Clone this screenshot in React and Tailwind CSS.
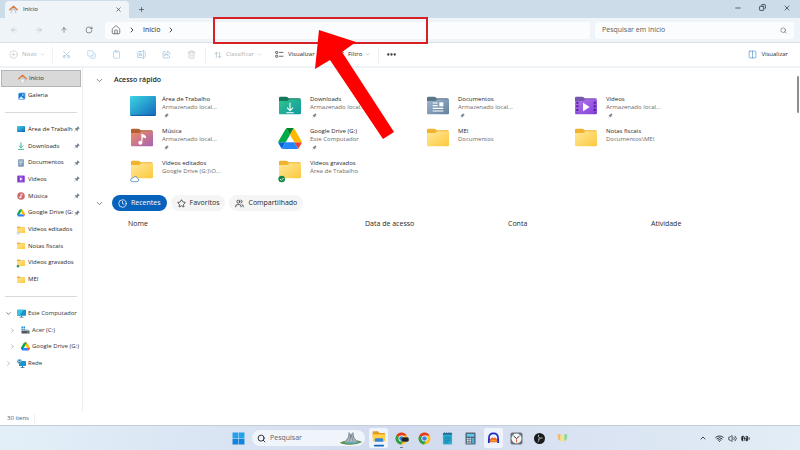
import {
  ArrowLeft, ArrowRight, ArrowUp, ArrowUpDown, BatteryCharging, ChevronDown, ChevronRight, ChevronUp,
  CirclePlus, Clipboard, Clock, Columns2, Copy, Copy as Restore, Ellipsis, Funnel, House,
  Minus, Plus, RotateCw, Scissors, Search, Star, Trash2, Users, Volume2, Wifi, X,
} from 'lucide-react';

function HomeIcon({ className }) {
  return (
    <svg viewBox="0 0 18 18" className={className}>
      <path d="M3.5 8v8.5H7V11h4v5.5h3.5V8L9 3z" fill="#c9ced3" />
      <path d="M7 11h4v5.5H7z" fill="#f7f9fb" />
      <path d="M1.3 9.6 9 2.4l7.7 7.2" fill="none" stroke="#dc7a3c" strokeWidth="2.5" strokeLinecap="round" strokeLinejoin="round" />
    </svg>
  );
}

function GalleryIcon({ className }) {
  return (
    <svg viewBox="0 0 18 18" className={className}>
      <rect x="3" y="1" width="14" height="14" rx="1.5" fill="#7cc5f5" />
      <rect x="1" y="3" width="14" height="14" rx="1.5" fill="#1377d4" />
      <circle cx="11" cy="7" r="1.7" fill="#fff" />
      <path d="m2 16 5-6.5 6.5 6.5z" fill="#d9f0ff" />
    </svg>
  );
}

function RenameIcon({ className }) {
  return (
    <svg viewBox="0 0 24 24" className={className} fill="none" stroke="currentColor" strokeWidth="1.8">
      <path d="M14 4H4a2 2 0 0 0-2 2v12q0 2 2 2h10M20 4.5q2 .5 2 2v11q0 1.5-2 2M17 1v22M14.5 1h5M14.5 23h5M5 16.5 9 7l4 9.5M6.5 13.5h5" />
    </svg>
  );
}

function ShareIcon({ className }) {
  return (
    <svg viewBox="0 0 24 24" className={className} fill="none" stroke="currentColor" strokeWidth="1.8" strokeLinejoin="round">
      <path d="M9 4H5a2 2 0 0 0-2 2v13q0 2 2 2h13q2 0 2-2v-3" />
      <path d="M15 2.5 22 9l-7 6.5v-4q-5 0-8 4 0-9 8-9z" />
    </svg>
  );
}

function ViewIcon({ className }) {
  return (
    <svg viewBox="0 0 24 20" className={className} fill="none" stroke="currentColor" strokeWidth="2">
      <rect x="1" y="1" width="6" height="6" rx="1.5" />
      <rect x="1" y="12" width="6" height="6" rx="1.5" />
      <path d="M11 4h12M11 15h12" />
    </svg>
  );
}

function DesktopIcon({ className }) {
  return (
    <svg viewBox="0 0 26 20" className={className} preserveAspectRatio="none">
      <defs>
        <linearGradient id="desk" x1="0" y1="0" x2="1" y2="1">
          <stop offset="0" stopColor="#3bd5e2" />
          <stop offset="1" stopColor="#1268bd" />
        </linearGradient>
      </defs>
      <rect width="26" height="20" rx="1.2" fill="url(#desk)" />
      <path d="M1 19.4h24" stroke="#0d4f96" strokeWidth="0.8" />
    </svg>
  );
}

function Folder({ id, tab, from, to, className, children }) {
  return (
    <svg viewBox="0 0 66 60" className={className}>
      <defs>
        <linearGradient id={id} x1="0" y1="0" x2="1" y2="1">
          <stop offset="0" stopColor={from} />
          <stop offset="1" stopColor={to} />
        </linearGradient>
      </defs>
      <path d="M0 6a4 4 0 0 1 4-4h17q3 0 5 2l3 3h32a4 4 0 0 1 4 4v10H0z" fill={tab} />
      <path d="M0 15h23q3 0 5-2l3-3h31a4 4 0 0 1 4 4v38a3 3 0 0 1-3 3H3a3 3 0 0 1-3-3z" fill={`url(#${id})`} />
      {children}
    </svg>
  );
}

function YellowFolder({ className, badge }) {
  return (
    <Folder id="yellow" tab="#f0b32f" from="#ffe79a" to="#fdc93c" className={`overflow-visible ${className}`}>
      {badge === 'cloud' && (
        <path d="M4 65q-6-1-5-6 1-5 6-4 3-7 10-5 4 2 4 5 5 1 4 6-1 4-5 4z" fill="#fff" stroke="#3a78c9" strokeWidth="2.2" />
      )}
      {badge === 'check' && (
        <g>
          <circle cx="8" cy="57" r="10" fill="#15884a" />
          <path d="m3 57 4 4 7-7" fill="none" stroke="#fff" strokeWidth="2.5" />
        </g>
      )}
    </Folder>
  );
}

function DownloadsFolder({ className }) {
  return (
    <Folder id="green" tab="#13795c" from="#2fc48d" to="#1397a0" className={className}>
      <path d="M33 20v23M24 35l9 9 9-9M22 50h22" fill="none" stroke="#fff" strokeWidth="3.2" />
    </Folder>
  );
}

function DocumentsFolder({ className }) {
  return (
    <Folder id="slate" tab="#5b7686" from="#9db6cd" to="#62809f" className={className}>
      <path d="M17 21h15M17 29h15M17 37h32M17 45h32" stroke="#fff" strokeWidth="3.4" />
      <rect x="37" y="19" width="12" height="12" fill="#fff" />
    </Folder>
  );
}

function VideosFolder({ className }) {
  return (
    <Folder id="violet" tab="#7756ae" from="#b276ee" to="#8440d8" className={className}>
      <path d="M24 20v26l20-13z" fill="#fff" />
      <path d="M7 17v35M59 17v35" stroke="#4b2291" strokeWidth="6" strokeDasharray="6 5" />
    </Folder>
  );
}

function MusicFolder({ className }) {
  return (
    <Folder id="music" tab="#b4602f" from="#ee8d62" to="#a561b4" className={className}>
      <circle cx="28" cy="44" r="6" fill="#fff" />
      <path d="M32.5 44V18l11 6v6l-8-4" fill="#fff" stroke="#fff" strokeWidth="2.5" />
    </Folder>
  );
}

function DriveIcon({ className }) {
  return (
    <svg viewBox="0 0 87 78" className={className}>
      <path d="M6.6 66.9l3.8 6.6c.8 1.4 1.900 2.500 3.300 3.300l13.700-23.800H0c0 1.500.4 3.100 1.200 4.500z" fill="#0066da" />
      <path d="M43.600 25 29.900 1.200c-1.300.8-2.500 1.900-3.300 3.300L1.200 48.500C.4 49.900 0 51.500 0 53h27.500z" fill="#00ac47" />
      <path d="M73.500 76.800c1.400-.8 2.500-1.900 3.300-3.300l9.200-16c.8-1.400 1.200-3 1.200-4.500H59.800l5.900 11.500z" fill="#ea4335" />
      <path d="M43.600 25 57.400 1.200C56 .4 54.500 0 52.900 0H34.400c-1.600 0-3.100.4-4.500 1.200z" fill="#00832d" />
      <path d="M59.800 53H27.500L13.700 76.800c1.400.8 2.900 1.200 4.500 1.200h50.900c1.600 0 3.100-.4 4.400-1.200z" fill="#2684fc" />
      <path d="M73.400 26.500 60.700 4.500c-.8-1.400-1.900-2.500-3.300-3.300L43.600 25l16.200 28h27.400c0-1.500-.4-3.100-1.200-4.500z" fill="#ffba00" />
    </svg>
  );
}

function DownloadIcon({ className }) {
  return (
    <svg viewBox="0 0 18 18" className={className} fill="none" stroke="#25ac86" strokeWidth="2">
      <path d="M9 1v11M4 8l5 5 5-5M2.5 16.5h13" />
    </svg>
  );
}

function DocumentIcon({ className }) {
  return (
    <svg viewBox="0 0 18 18" className={className}>
      <rect x="2.5" y="0.5" width="13" height="17" rx="1.5" fill="#7d99b6" />
      <path d="M5 4.5h8M5 8h8M5 11.5h5" stroke="#e9f1f9" strokeWidth="1.6" />
    </svg>
  );
}

function VideoIcon({ className }) {
  return (
    <svg viewBox="0 0 18 18" className={className}>
      <rect x="0.5" y="1" width="17" height="16" rx="1.5" fill="#9550e0" />
      <path d="M3 3v13M15 3v13" stroke="#5a279f" strokeWidth="2.2" strokeDasharray="2.4 2" />
      <path d="M7 5.5v7l5.5-3.5z" fill="#fff" />
    </svg>
  );
}

function MusicIcon({ className }) {
  return (
    <svg viewBox="0 0 18 18" className={className}>
      <circle cx="9" cy="9" r="8.5" fill="#d3696c" />
      <circle cx="7.5" cy="12" r="2.2" fill="#fff" />
      <path d="M9 12V4.5l4 2" fill="none" stroke="#fff" strokeWidth="1.6" />
    </svg>
  );
}

function MonitorIcon({ className }) {
  return (
    <svg viewBox="0 0 18 18" className={className}>
      <rect x="0" y="1.5" width="18" height="12" rx="1" fill="#1595cf" />
      <path d="M0 2.5a1 1 0 0 1 1-1h13L4 13.5H1a1 1 0 0 1-1-1z" fill="#3cc3e0" />
      <path d="M8 13.5h2v2.5H8zM5 15.5h8v1.5H5z" fill="#4d6a80" />
    </svg>
  );
}

function DiskIcon({ className }) {
  return (
    <svg viewBox="0 0 18 18" className={className}>
      <path d="M1 1h3v3H1zM5 1h3v3H5zM1 5h3v3H1zM5 5h3v3H5z" fill="#1b87d8" />
      <path d="M1 9h16v6H1z" fill="#4c545c" />
      <path d="M1 9h16l-2-2H3z" fill="#aab3bb" />
      <path d="M12 12h3" stroke="#7fe09b" strokeWidth="1.5" />
    </svg>
  );
}

function NetworkIcon({ className }) {
  return (
    <svg viewBox="0 0 18 18" className={className}>
      <rect x="4" y="4" width="14" height="10" rx="1" fill="#1b93cc" />
      <path d="M10 14h2v2.5h3V18H7v-1.5h3z" fill="#3f708f" />
      <circle cx="5" cy="5" r="4.5" fill="#2a7fb4" />
      <path d="M1 5h8M5 .8c-3 2-3 6 0 8.5 3-2.5 3-6.5 0-8.5" fill="none" stroke="#a8def5" />
    </svg>
  );
}

function PinIcon({ className }) {
  return (
    <svg viewBox="0 0 18 18" className={className}>
      <path d="m11 1 6 6-1.5 1.2-1-.2-3 3-.3 3.5L10 16l-3.800-3.800L1.500 17l-.7-.7 4.900-4.700L2 8l1.500-1.200 3.500-.3 3-3-.2-1z" fill="#76838f" />
    </svg>
  );
}

const pinned = [
  { label: 'Área de Trabalho', icon: DesktopIcon, pin: true },
  { label: 'Downloads', icon: DownloadIcon, pin: true },
  { label: 'Documentos', icon: DocumentIcon, pin: true },
  { label: 'Vídeos', icon: VideoIcon, pin: true },
  { label: 'Música', icon: MusicIcon, pin: true },
  { label: 'Google Drive (G:)', icon: DriveIcon, pin: true },
  { label: 'Vídeos editados', icon: YellowFolder, badge: 'cloud' },
  { label: 'Notas fiscais', icon: YellowFolder },
  { label: 'Vídeos gravados', icon: YellowFolder, badge: 'check' },
  { label: 'MEI', icon: YellowFolder },
];

const quickAccess = [
  { name: 'Área de Trabalho', place: 'Armazenado local...', icon: DesktopIcon, pin: true },
  { name: 'Downloads', place: 'Armazenado local...', icon: DownloadsFolder, pin: true },
  { name: 'Documentos', place: 'Armazenado local...', icon: DocumentsFolder, pin: true },
  { name: 'Vídeos', place: 'Armazenado local...', icon: VideosFolder, pin: true },
  { name: 'Música', place: 'Armazenado local...', icon: MusicFolder, pin: true },
  { name: 'Google Drive (G:)', place: 'Este Computador', icon: DriveIcon, pin: true },
  { name: 'MEI', place: 'Documentos', icon: YellowFolder },
  { name: 'Notas fiscais', place: 'Documentos\\MEI', icon: YellowFolder },
  { name: 'Vídeos editados', place: 'Google Drive (G:)\\O...', icon: YellowFolder, badge: 'cloud' },
  { name: 'Vídeos gravados', place: 'Área de Trabalho', icon: YellowFolder, badge: 'check' },
];

function TitleBar() {
  return (
    <header className="flex h-[18px] items-stretch bg-[#ccdce9] pl-[5px]">
      <div className="mt-px flex w-[124px] items-center rounded-t-[4px] bg-[#eff4f9] pr-[7px] pl-1">
        <HomeIcon className="size-[9px]" />
        <span className="ml-[5px] flex-1">Início</span>
        <button type="button" aria-label="Fechar guia"><X className="size-[7px]" /></button>
      </div>
      <button type="button" aria-label="Nova guia" className="ml-2 px-px"><Plus className="size-[7px]" /></button>
      <div className="ml-auto flex items-center gap-[17px] pr-[9px] pb-[3px]">
        <button type="button" aria-label="Minimizar"><Minus className="size-2" /></button>
        <button type="button" aria-label="Restaurar"><Restore className="size-[7px] -scale-x-100" strokeWidth={2.5} /></button>
        <button type="button" aria-label="Fechar"><X className="size-2" /></button>
      </div>
    </header>
  );
}

function NavigationBar() {
  return (
    <nav className="flex h-[25px] items-center border-b border-[#d5e0e9] bg-[#eff4f9] pr-[6px] pl-[10px]">
      <div className="flex w-[95px] gap-[17px] text-[#5c6064]">
        <button type="button" aria-label="Voltar" className="text-[#b9bec3]"><ArrowLeft className="size-2" /></button>
        <button type="button" aria-label="Avançar" className="text-[#b9bec3]"><ArrowRight className="size-2" /></button>
        <button type="button" aria-label="Acima"><ArrowUp className="size-2" /></button>
        <button type="button" aria-label="Atualizar"><RotateCw className="size-2" /></button>
      </div>
      <div className="flex h-[17px] flex-1 items-center rounded-[2px] bg-[#fafcfd] pl-[6px] text-[7px]">
        <button type="button" aria-label="Início"><House className="size-[10px] text-[#66696c]" /></button>
        <ChevronRight className="ml-[7px] size-2" strokeWidth={2.5} />
        <button type="button" className="ml-[7px]">Início</button>
        <ChevronRight className="ml-[7px] size-2" strokeWidth={2.5} />
      </div>
      <div className="ml-[5px] flex h-[17px] w-[199px] items-center rounded-[2px] bg-[#fafcfd] px-[7px] text-[7px]">
        <input type="search" aria-label="Pesquisar em Início" placeholder="Pesquisar em Início" className="min-w-0 flex-1 outline-none placeholder:text-[#5a5d60]" />
        <Search className="size-[7px] text-[#5f6366]" />
      </div>
    </nav>
  );
}

function Toolbar() {
  return (
    <div className="flex h-[25px] items-center border-b-2 border-[#eef3f8] bg-white pr-3 pl-[9px]">
      <button type="button" disabled className="flex w-[43px] items-center gap-1 text-[#adb1b5]">
        <CirclePlus className="size-[9px] text-[#b9c0c7]" strokeWidth={1.5} />Novo<ChevronDown className="-ml-px size-[5px]" />
      </button>
      <div className="flex h-4 w-[154px] items-center gap-4 border-x border-[#f0f0f0] pl-[9px] text-[#8fbce0]">
        <button type="button" disabled aria-label="Recortar"><Scissors className="size-[9px] -rotate-90" strokeWidth={1.5} /></button>
        <button type="button" disabled aria-label="Copiar"><Copy className="size-[9px] -scale-100" strokeWidth={1.5} /></button>
        <button type="button" disabled aria-label="Colar"><Clipboard className="size-[9px]" strokeWidth={1.5} /></button>
        <button type="button" disabled aria-label="Renomear"><RenameIcon className="size-[9px]" /></button>
        <button type="button" disabled aria-label="Compartilhar"><ShareIcon className="size-[9px]" /></button>
        <button type="button" disabled aria-label="Excluir" className="text-[#b3b7bb]"><Trash2 className="size-[9px]" strokeWidth={1.5} /></button>
      </div>
      <button type="button" disabled className="ml-[8px] flex w-[61px] items-center gap-1 text-[#adb1b5]">
        <ArrowUpDown className="size-2 text-[#9fb6c6]" />Classificar<ChevronDown className="-ml-px size-[5px]" />
      </button>
      <button type="button" className="flex w-[62px] items-center gap-1">
        <ViewIcon className="h-[7px] w-[9px]" />Visualizar<ChevronDown className="-ml-px size-[5px] text-[#85898d]" />
      </button>
      <button type="button" className="flex w-[41px] items-center gap-1">
        <Funnel className="size-[7px]" />Filtro<ChevronDown className="-ml-px size-[5px] text-[#85898d]" />
      </button>
      <button type="button" aria-label="Mais opções" className="flex h-4 items-center border-l border-[#f0f0f0] pl-[7px]">
        <Ellipsis className="size-[11px]" strokeWidth={3} />
      </button>
      <button type="button" className="ml-auto flex items-center gap-1">
        <Columns2 className="size-[9px] text-[#357fbb]" strokeWidth={1.5} />Visualizar
      </button>
    </div>
  );
}

function Sidebar() {
  return (
    <aside className="w-[83px] shrink-0 border-r border-[#f0f0f0] pt-[2px] pr-px pl-px">
      <a href="#inicio" className="flex h-[17px] items-center gap-[2px] border border-[#b5b5b5] bg-[#d9d9d9] pl-4">
        <HomeIcon className="size-[9px]" />Início
      </a>
      <a href="#galeria" className="flex h-[17px] items-center gap-[2px] pl-[17px]">
        <GalleryIcon className="size-2" />Galeria
      </a>
      <hr className="mx-1 my-2 border-[#dadada]" />
      <ul className="flex h-[167px] flex-col">
        {pinned.map(({ label, icon: Icon, pin, badge }) => (
          <li key={label} className="flex flex-1">
            <a href="#pasta" className="flex min-w-0 flex-1 items-center gap-[3px] pr-px pl-4">
              <Icon className={Icon === DesktopIcon ? 'h-[6px] w-2 shrink-0' : 'size-2 shrink-0'} badge={badge} />
              <span className="min-w-0 flex-1 overflow-hidden whitespace-nowrap">{label}</span>
              {pin && <PinIcon className="-ml-[2px] size-[6px] shrink-0" />}
            </a>
          </li>
        ))}
      </ul>
      <hr className="mx-1 my-2 border-[#dadada]" />
      <ul className="flex h-[67px] flex-col whitespace-nowrap text-[#303234]">
        <li className="flex flex-1 items-center pl-1">
          <ChevronDown className="mr-[5px] size-[7px] shrink-0" />
          <a href="#computador" className="flex items-center gap-[2px]"><MonitorIcon className="size-[9px]" />Este Computador</a>
        </li>
        <li className="flex flex-1 items-center pl-2">
          <ChevronRight className="mr-[5px] size-[7px] shrink-0 text-[#85898d]" />
          <a href="#acer" className="flex items-center gap-[2px]"><DiskIcon className="size-[9px]" />Acer (C:)</a>
        </li>
        <li className="flex flex-1 items-center pl-2">
          <ChevronRight className="mr-[5px] size-[7px] shrink-0 text-[#85898d]" />
          <a href="#drive" className="flex items-center gap-[2px]"><DriveIcon className="size-[9px]" />Google Drive (G:)</a>
        </li>
        <li className="flex flex-1 items-center pl-1">
          <ChevronRight className="mr-[5px] size-[7px] shrink-0 text-[#85898d]" />
          <a href="#rede" className="flex items-center gap-[2px]"><NetworkIcon className="size-[9px]" />Rede</a>
        </li>
      </ul>
    </aside>
  );
}

function Content() {
  return (
    <main className="min-w-0 flex-1 pt-[6px] pr-[3px] pl-3">
      <h2 className="flex h-[13px] items-center gap-[10px] text-[7px] font-semibold">
        <button type="button" aria-label="Recolher acesso rápido"><ChevronDown className="size-[9px]" strokeWidth={1.5} /></button>
        Acesso rápido
      </h2>
      <ul className="mt-2 grid grid-cols-[repeat(auto-fill,148px)] pl-[35px]">
        {quickAccess.map(({ name, place, icon: Icon, pin, badge }) => (
          <li key={name} className="h-8">
            <a href="#item" className="flex leading-2">
              <span className="flex h-6 w-[32px] pt-px">
                <Icon
                  className={Icon === DesktopIcon ? 'h-[20px] w-[26px]' : Icon === DriveIcon ? 'h-[21px] w-[24px]' : 'ml-px h-[20px] w-[22px]'}
                  badge={badge}
                />
              </span>
              <span>
                <span className="block">{name}</span>
                <span className="block text-[#6b6b6b]">{place}</span>
                {pin && <PinIcon className="mt-[2px] ml-[2px] size-[5px]" />}
              </span>
            </a>
          </li>
        ))}
      </ul>
      <div className="mt-1 flex h-4 items-center gap-1 text-[7px]">
        <button type="button" aria-label="Recolher recentes" className="mr-1"><ChevronDown className="size-[9px]" strokeWidth={1.5} /></button>
        <button type="button" className="flex h-4 items-center gap-1 rounded-full bg-[#0662bb] px-[6px] text-white">
          <Clock className="size-[9px]" />Recentes
        </button>
        <button type="button" className="flex h-4 items-center gap-1 rounded-full bg-[#f5f5f5] px-[6px]">
          <Star className="size-[9px]" />Favoritos
        </button>
        <button type="button" className="flex h-4 items-center gap-1 rounded-full bg-[#f5f5f5] px-[6px]">
          <Users className="size-[9px]" />Compartilhado
        </button>
      </div>
      <div className="pl-[33px]">
        <table className="mt-2 w-full table-fixed text-left text-[7px]">
          <thead>
            <tr>
              <th className="w-[237px] font-normal">Nome</th>
              <th className="font-normal">Data de acesso</th>
              <th className="font-normal">Conta</th>
              <th className="font-normal">Atividade</th>
            </tr>
          </thead>
        </table>
      </div>
    </main>
  );
}

function ChromeIcon({ className }) {
  return (
    <svg viewBox="0 0 24 24" className={className}>
      <circle cx="12" cy="12" r="11" fill="#fbc116" />
      <path d="M12 12 2.5 6.5A11 11 0 0 1 21.5 6.5H12z" fill="#e33b2e" />
      <path d="M2.5 6.5A11 11 0 0 0 11 23l5.5-8.5L12 12z" fill="#2c9f4b" />
      <circle cx="12" cy="12" r="5.5" fill="#fff" />
      <circle cx="12" cy="12" r="4.2" fill="#3b7de9" />
    </svg>
  );
}

function TaskButton({ label, active, running, children }) {
  return (
    <button
      type="button"
      aria-label={label}
      className={`relative flex h-5 w-[19px] items-center justify-center rounded-[2px] ${active ? 'bg-[#eef3fc]' : ''}`}
    >
      {children}
      {running && <span className="absolute bottom-0 h-px w-[3px] rounded-full bg-[#6c7480]" />}
    </button>
  );
}

function Taskbar() {
  return (
    <footer className="relative flex h-[25px] shrink-0 items-center justify-center border-t border-[#c3ced8] bg-linear-to-r from-[#e3eff8] via-[#d2dbef] to-[#e2edf6] pl-1">
      <div className="flex items-center gap-1">
        <button type="button" aria-label="Iniciar" className="mr-[3px]">
          <svg viewBox="0 0 24 24" className="size-[13px]" fill="#1284dc">
            <path d="M1 1h10.5v10.5H1zM12.5 1H23v10.5H12.5z" fill="#22a2e8" />
            <path d="M1 12.5h10.5V23H1zM12.5 12.5H23V23H12.5z" />
          </svg>
        </button>
        <div className="flex h-4 w-[113px] items-center rounded-full bg-[#f0f4fb] pr-[2px] pl-[5px] text-[7px]">
          <Search className="size-[9px] text-[#24282c]" strokeWidth={2.5} />
          <input type="search" aria-label="Pesquisar" placeholder="Pesquisar" className="ml-1 min-w-0 flex-1 outline-none placeholder:text-[#5f6368]" />
          <svg viewBox="0 0 72 42" className="h-[14px] w-6">
            <path d="M2 35q16-9 34-6 20-4 34 4-14 8-34 8-22 0-34-6z" fill="#64914c" />
            <path d="M14 35q22-7 48 0-20 5-48 0" fill="#5bacc7" />
            <path d="M17 32Q30 20 28 3l8 6 8-6q-2 17 11 29z" fill="#b2bbc4" />
            <path d="M20 31q13-12 11-26M53 31Q40 19 41 5M30 31q5-9 5-21M43 31q-5-9-6-21" fill="none" stroke="#5f6f80" strokeWidth="2" />
          </svg>
        </div>
        <TaskButton label="Explorador de Arquivos" active>
          <svg viewBox="0 0 40 48" className="h-[17px] w-[14px]">
            <path d="M2 6q0-3 3-3h12l4 5h16v12H2z" fill="#e29c19" />
            <path d="M2 12h36v20H2z" fill="#ffd04b" />
            <path d="M8 27q0-4 4-4h16q4 0 4 4v6H8z" fill="#3486d4" />
            <path d="M8 44h24" stroke="#1268b8" strokeWidth="5" strokeLinecap="round" />
          </svg>
        </TaskButton>
        <TaskButton label="Google Chrome, perfil" running>
          <ChromeIcon className="size-[13px]" />
          <span className="absolute top-[9px] right-[2px] h-[5px] w-2 rounded-[2px] border border-[#555b52] bg-[#20242a]" />
        </TaskButton>
        <TaskButton label="Google Chrome"><ChromeIcon className="size-[13px]" /></TaskButton>
        <TaskButton label="Bloco de Notas">
          <svg viewBox="0 0 24 28" className="h-[13px] w-[11px]">
            <rect x="2" y="3" width="20" height="24" rx="2" fill="#2faed3" />
            <path d="M2 6V4q0-2 2-2h16q2 0 2 2v2z" fill="#1576a1" />
            <path d="M5 0v5M10 0v5M15 0v5M19.5 0v5" stroke="#32627b" strokeWidth="1.5" />
            <path d="M5 11h14M5 15h14M5 19h14M5 23h9" stroke="#127197" strokeWidth="1.6" />
          </svg>
        </TaskButton>
        <TaskButton label="Calculadora">
          <svg viewBox="0 0 24 28" className="h-[13px] w-[11px]">
            <rect x="1" y="1" width="22" height="26" rx="2" fill="#506676" />
            <rect x="4" y="4" width="16" height="6" fill="#5fc8ef" />
            <path d="M4 14.5h10M4 19h10M4 23.5h10" stroke="#d3dce2" strokeWidth="3" strokeDasharray="4 1.5" />
            <path d="M15.5 13h4.5v12h-4.5z" fill="#4ab2e8" />
          </svg>
        </TaskButton>
        <TaskButton label="Audacity" active>
          <svg viewBox="0 0 28 26" className="h-[12px] w-[13px]">
            <path d="M4 18v-4q0-11 10-11t10 11v4" fill="none" stroke="#202cc5" strokeWidth="3.5" />
            <path d="M2 14h4v10H2zM22 14h4v10h-4z" fill="#202cc5" />
            <path d="M6 17q4-7 8-4 4-3 8 4l-1 5H7z" fill="#f26b21" />
            <path d="M9 18h10v2H9z" fill="#fbc02d" />
          </svg>
        </TaskButton>
        <TaskButton label="Relógio">
          <svg viewBox="0 0 26 26" className="size-[13px]">
            <rect x="1" y="1" width="24" height="24" rx="4" fill="#6a7078" />
            <circle cx="13" cy="13" r="10" fill="#f2f4f5" />
            <path d="m7 8 6 5 6-5" fill="none" stroke="#383d43" strokeWidth="2" />
            <path d="M13 13v8" stroke="#df6546" strokeWidth="2" />
          </svg>
        </TaskButton>
        <TaskButton label="OBS Studio">
          <svg viewBox="0 0 24 24" className="size-[11px]">
            <circle cx="12" cy="12" r="12" fill="#191b1d" />
            <path d="M10 4q-2 5 3 7M19 11q-6-2-7 3M8 19q5-2 2-7" fill="none" stroke="#c4c8ca" strokeWidth="2" />
          </svg>
        </TaskButton>
        <TaskButton label="Leitor">
          <svg viewBox="0 0 28 22" className="h-2 w-[11px]">
            <path d="M1 1h8v17l-5-1q-3-6-3-16z" fill="#f6b56a" />
            <path d="M8 4h12v17H9z" fill="#f3e58e" />
            <path d="M19 1h8q0 10-3 16l-5 1z" fill="#89d998" />
          </svg>
        </TaskButton>
      </div>
      <div className="absolute right-[50px] flex items-center gap-1 text-[#1f2327]">
        <button type="button" aria-label="Mostrar ícones ocultos" className="mr-1"><ChevronUp className="size-2" strokeWidth={2.5} /></button>
        <Wifi className="size-[9px]" strokeWidth={2.5} />
        <Volume2 className="size-[9px]" />
        <BatteryCharging className="size-[9px]" fill="currentColor" />
      </div>
    </footer>
  );
}

export default function App() {
  return (
    <div className="relative flex h-screen min-h-[450px] flex-col overflow-hidden bg-white font-['Open_Sans',sans-serif] text-[6px] text-[#26282a]">
      <TitleBar />
      <NavigationBar />
      <Toolbar />
      <div className="flex min-h-0 flex-1">
        <Sidebar />
        <Content />
        <div className="mt-2 mr-px h-[37px] w-[2px] rounded-full bg-[#8e8e8e]" />
      </div>
      <div className="flex h-[13px] items-center pl-[7px] text-[#46617d]">
        <span className="border-r border-[#efefef] pr-[5px]">30 itens</span>
      </div>
      <Taskbar />

      {/* annotation drawn over the address bar */}
      <div className="pointer-events-none absolute top-[17px] left-[213px] h-[27px] w-[215px] border-2 border-[#d92125]" />
      <svg viewBox="0 0 79 109" className="pointer-events-none absolute top-[30px] left-[315px] h-[109px] w-[79px]">
        <path d="M4 0 41 12 27 22 79 102 68 109 15 30 0 39z" fill="#fe0000" />
      </svg>
    </div>
  );
}
